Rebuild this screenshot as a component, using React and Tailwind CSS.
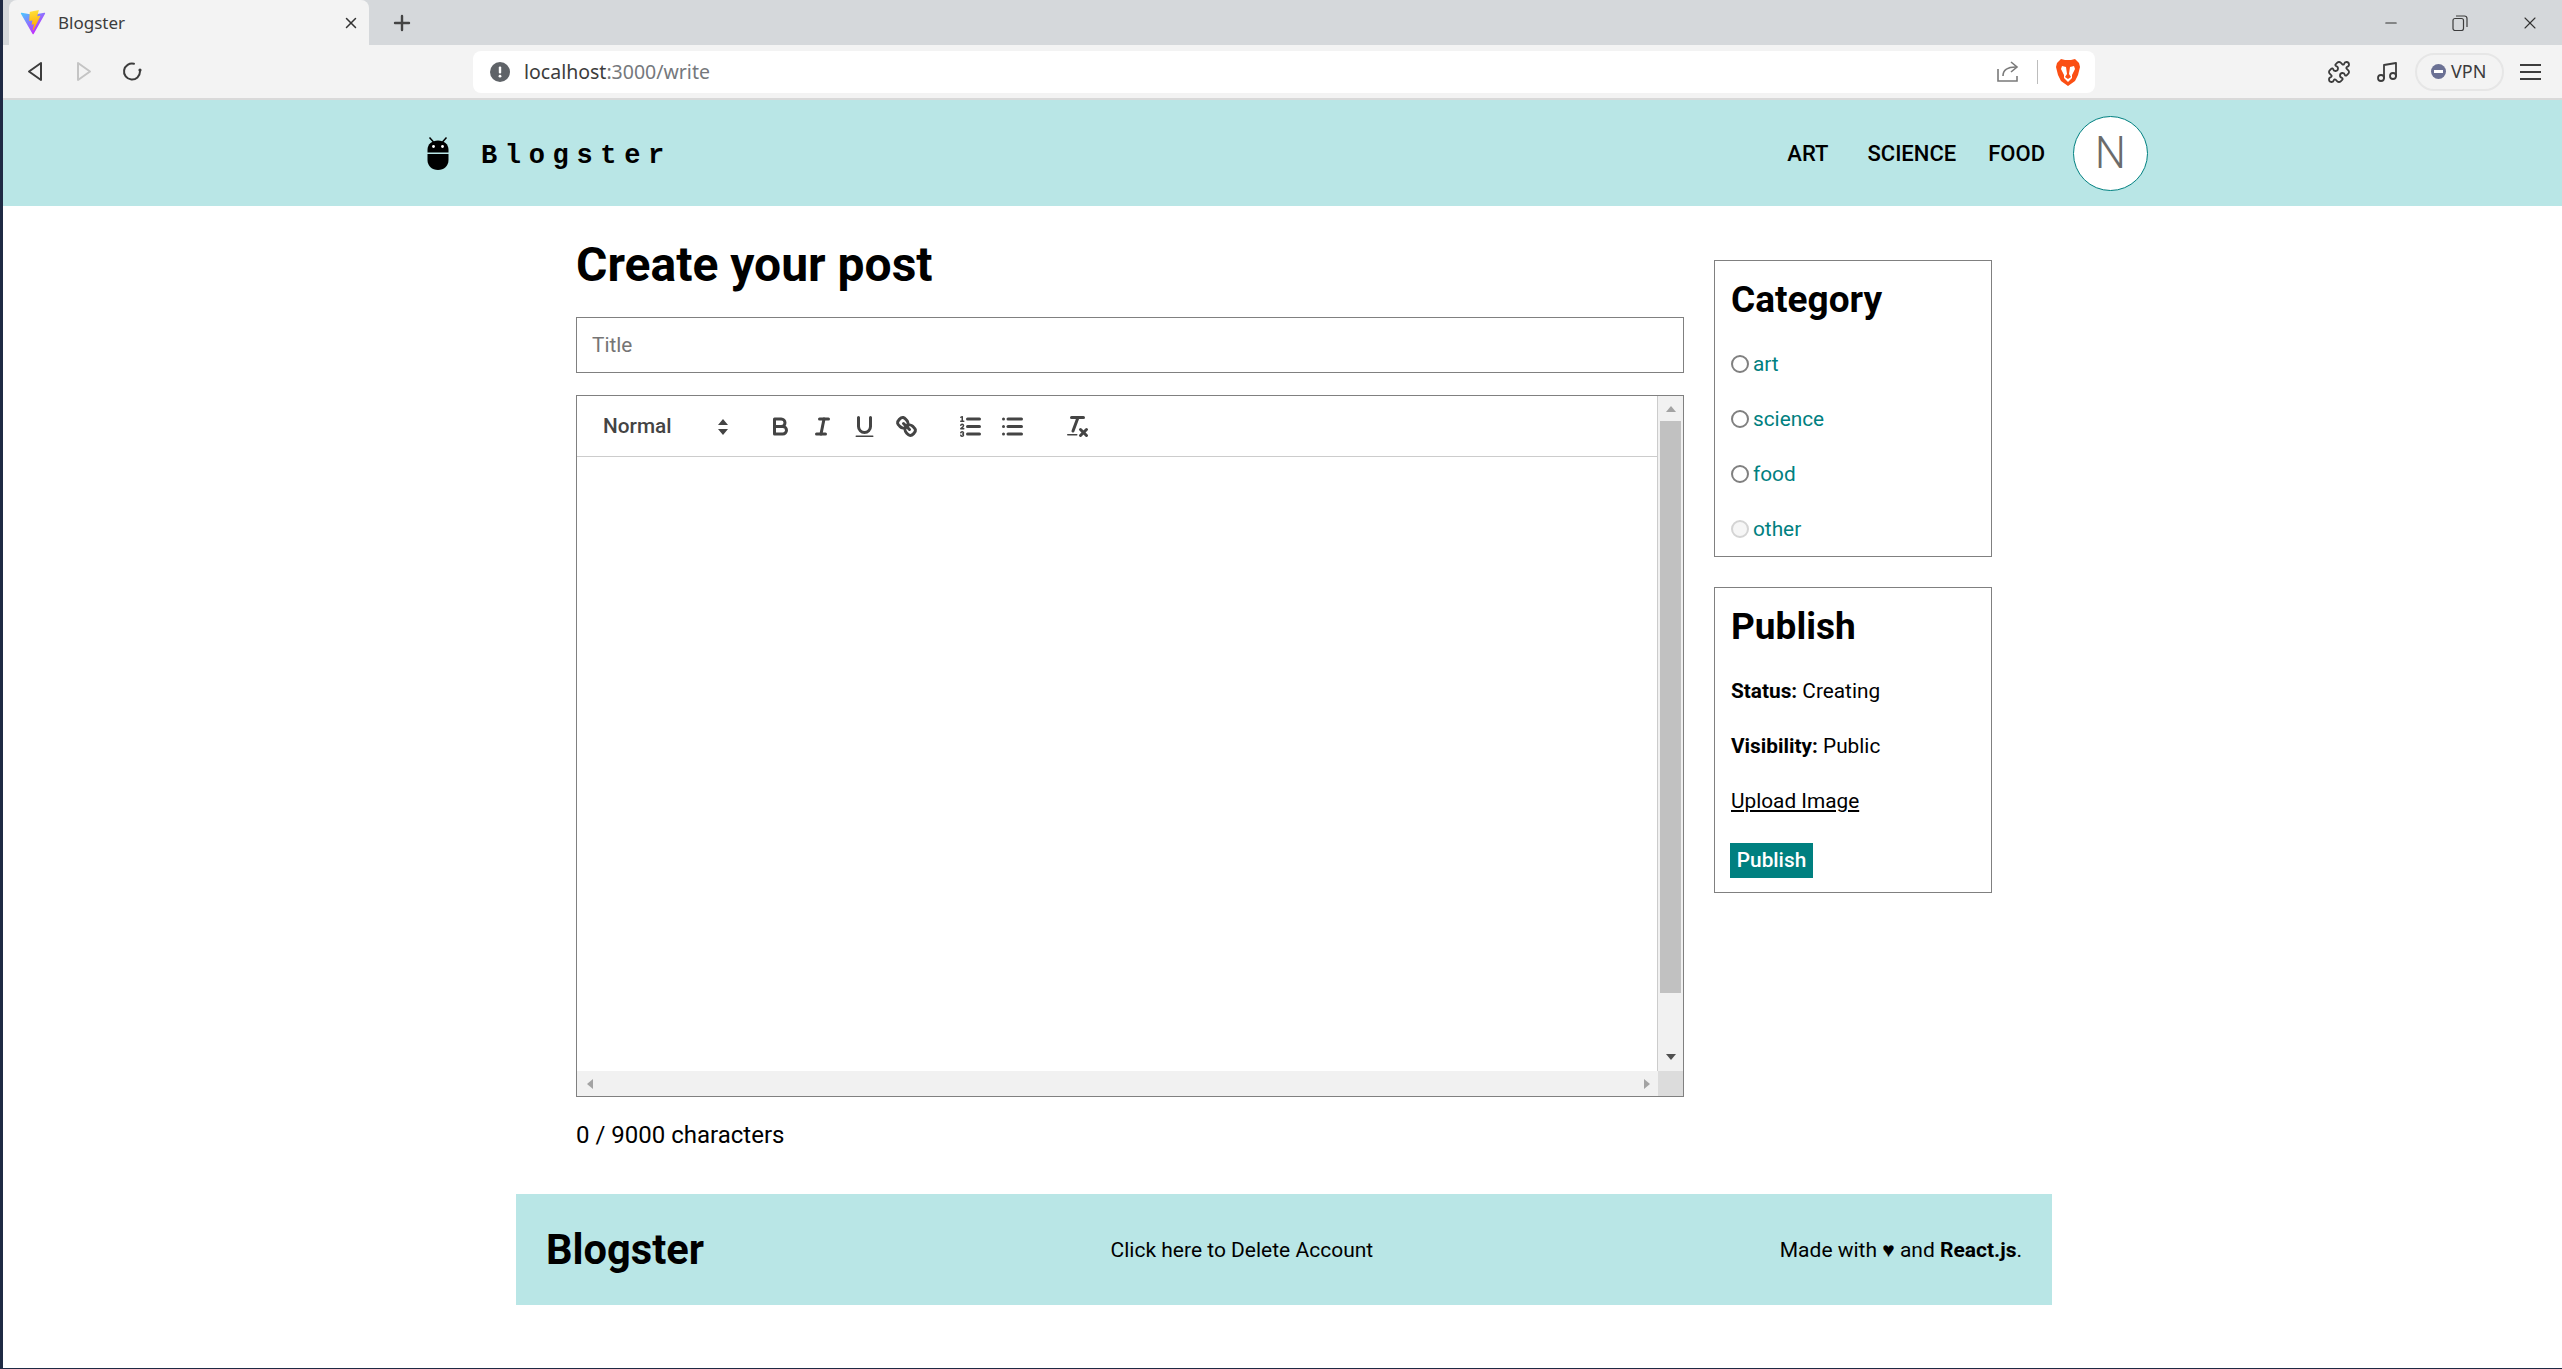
import { Puzzle, Music, Minus, X, Plus } from 'lucide-react';

const ViteLogo = () => (
  <svg width="26" height="25" viewBox="0 0 410 404" fill="none">
    <defs>
      <linearGradient id="viteA" x1="6" y1="33" x2="235" y2="344" gradientUnits="userSpaceOnUse">
        <stop stopColor="#41D1FF" />
        <stop offset="1" stopColor="#BD34FE" />
      </linearGradient>
      <linearGradient id="viteB" x1="194" y1="8" x2="236" y2="292" gradientUnits="userSpaceOnUse">
        <stop stopColor="#FFEA83" />
        <stop offset="0.08" stopColor="#FFDD35" />
        <stop offset="1" stopColor="#FFA800" />
      </linearGradient>
    </defs>
    <path d="M399.641 59.5246L215.643 388.545C211.844 395.338 202.084 395.378 198.228 388.618L10.5817 59.5563C6.38087 52.1896 12.6802 43.2665 21.0281 44.7586L205.223 77.6824C206.398 77.8924 207.601 77.8904 208.776 77.6763L389.119 44.8058C397.439 43.2894 403.768 52.1434 399.641 59.5246Z" fill="url(#viteA)" />
    <path d="M292.965 1.5744L156.801 28.2552C154.563 28.6937 152.906 30.5903 152.771 32.8664L144.395 174.33C144.198 177.662 147.258 180.248 150.51 179.498L188.42 170.749C191.967 169.931 195.172 173.055 194.443 176.622L183.18 231.775C182.422 235.487 185.907 238.661 189.532 237.56L212.947 230.446C216.577 229.344 220.065 232.527 219.297 236.242L201.398 322.875C200.278 328.294 207.486 331.249 210.492 326.603L212.5 323.5L323.454 102.072C325.312 98.3645 322.108 94.137 318.036 94.9228L279.014 102.454C275.347 103.161 272.227 99.746 273.262 96.1583L298.731 7.86689C299.767 4.27314 296.636 0.855181 292.965 1.5744Z" fill="url(#viteB)" />
  </svg>
);

const BackIcon = ({ flip, color }) => (
  <svg width="18" height="21" viewBox="0 0 18 21" fill="none" stroke={color} strokeWidth="2" strokeLinejoin="round" className={flip ? '-scale-x-100' : ''}>
    <path d="M15 2 L3 10.5 L15 19 Z" />
  </svg>
);

const ReloadIcon = () => (
  <svg width="20" height="21" viewBox="0 0 20 21" fill="none" stroke="#3c3c3c" strokeWidth="2" strokeLinecap="round" className="-ml-[2px]">
    <path d="M18 10.5 A8 8 0 1 1 12 2.8" />
    <circle cx="18" cy="9" r="1.6" fill="#3c3c3c" stroke="none" />
  </svg>
);

const InfoIcon = () => (
  <svg width="20" height="20" viewBox="0 0 20 20">
    <circle cx="10" cy="10" r="10" fill="#5f6368" />
    <rect x="8.8" y="4.5" width="2.4" height="7" rx="1" fill="#fff" />
    <circle cx="10" cy="14.2" r="1.4" fill="#fff" />
  </svg>
);

const ShareIcon = () => (
  <svg width="22" height="21" viewBox="0 0 22 21" fill="none" stroke="#7a7a7a" strokeWidth="1.6">
    <path d="M1 8 V20 H20 V15" />
    <path d="M6 15 C6 9 10 6 19 6" />
    <path d="M14 1 L20 6 L14 11" />
  </svg>
);

const BraveIcon = () => (
  <svg width="24" height="28" viewBox="0 0 24 28">
    <path d="M5 1 L9 2 H15 L19 1 L23 5 L24 9 L22 17 L19 23 L12 28 L5 23 L2 17 L0 9 L1 5 Z" fill="#fb4f14" />
    <path d="M6 8 L10 9 L11 16 L9 19 L12 21 L15 19 L13 16 L14 9 L18 8 L19 11 L16 17 L16 20 L12 24 L8 20 L8 17 L5 11 Z" fill="#fff" />
  </svg>
);

const RestoreIcon = () => (
  <svg width="16" height="16" viewBox="0 0 16 16" fill="none" stroke="#3c3c3c" strokeWidth="1.2">
    <rect x="1" y="3.5" width="10.5" height="12" rx="2" />
    <path d="M4 1 H12.5 A2.5 2.5 0 0 1 15 3.5 V12" />
  </svg>
);

const AndroidLogo = () => (
  <svg width="22" height="33" viewBox="0 0 22 33" fill="#000">
    <path d="M2.5 0.5 L6.5 5 M19.5 0.5 L15.5 5" stroke="#000" strokeWidth="1.5" />
    <path d="M0.5 15.5 V13 C0.5 7 5 3.5 11 3.5 C17 3.5 21.5 7 21.5 13 V15.5 Z" />
    <circle cx="6.5" cy="9.5" r="1.4" fill="#fff" />
    <circle cx="15.5" cy="9.5" r="1.4" fill="#fff" />
    <path d="M0.5 17 H21.5 V23 C21.5 29 17 33 11 33 C5 33 0.5 29 0.5 23 Z" />
  </svg>
);

const Quill = ({ children }) => (
  <button className="w-[42px] h-[36px] flex items-center justify-center">
    <svg width="27" height="27" viewBox="0 0 18 18" fill="none" stroke="#444" strokeWidth="2" strokeLinecap="round" strokeLinejoin="round">
      {children}
    </svg>
  </button>
);

const Toolbar = () => (
  <div className="h-[61px] border-b border-[#ccc] flex items-center pl-[26px] pt-px shrink-0">
    <div className="w-[156px] flex items-center justify-between pr-[31px] text-[20.8px] font-medium text-[#444]">
      <span>Normal</span>
      <svg width="10" height="16" viewBox="0 0 10 16" fill="#444">
        <path d="M5 0 L10 6 H0 Z M5 16 L0 10 H10 Z" />
      </svg>
    </div>
    <Quill>
      <path d="M5,4H9.5A2.5,2.5,0,0,1,12,6.5v0A2.5,2.5,0,0,1,9.5,9H5A0,0,0,0,1,5,9V4A0,0,0,0,1,5,4Z" />
      <path d="M5,9h5.5A2.5,2.5,0,0,1,13,11.5v0A2.5,2.5,0,0,1,10.5,14H5a0,0,0,0,1,0,0V9A0,0,0,0,1,5,9Z" />
    </Quill>
    <Quill>
      <line x1="7" x2="13" y1="4" y2="4" />
      <line x1="5" x2="11" y1="14" y2="14" />
      <line x1="8" x2="10" y1="14" y2="4" />
    </Quill>
    <Quill>
      <path d="M5,3V9a4.012,4.012,0,0,0,4,4H9a4.012,4.012,0,0,0,4-4V3" />
      <rect x="3" y="15" width="12" height="1" rx=".5" ry=".5" fill="#444" stroke="none" />
    </Quill>
    <Quill>
      <line x1="7" x2="11" y1="7" y2="11" />
      <path d="M8.9,4.577a3.476,3.476,0,0,1,.36,4.679A3.476,3.476,0,0,1,4.577,8.9C3.185,7.5,2.035,6.4,4.217,4.217S7.5,3.185,8.9,4.577Z" />
      <path d="M13.423,9.1a3.476,3.476,0,0,0-4.679-.36,3.476,3.476,0,0,0,.36,4.679c1.392,1.392,2.5,2.542,4.679.36S14.815,10.5,13.423,9.1Z" />
    </Quill>
    <div className="w-[22px]" />
    <Quill>
      <line x1="7" x2="15" y1="4" y2="4" />
      <line x1="7" x2="15" y1="9" y2="9" />
      <line x1="7" x2="15" y1="14" y2="14" />
      <line x1="2.5" x2="4.5" y1="5.5" y2="5.5" strokeWidth="1" />
      <path d="M3.5,6A0.5,0.5,0,0,1,3,5.5V3.085l-0.276.138A0.5,0.5,0,0,1,2.053,3c-0.124-.247-0.023-0.324.224-0.447l1-.5A0.5,0.5,0,0,1,4,2.5v3A0.5,0.5,0,0,1,3.5,6Z" fill="#444" stroke="none" />
      <path d="M4.5,10.5h-2c0-.234,1.85-1.076,1.85-2.234A0.959,0.959,0,0,0,2.5,8.156" strokeWidth="1" />
      <path d="M2.5,14.846a0.959,0.959,0,0,0,1.85-.109A0.7,0.7,0,0,0,3.75,14a0.688,0.688,0,0,0,.6-0.736,0.959,0.959,0,0,0-1.85-.109" strokeWidth="1" />
    </Quill>
    <Quill>
      <line x1="6" x2="15" y1="4" y2="4" />
      <line x1="6" x2="15" y1="9" y2="9" />
      <line x1="6" x2="15" y1="14" y2="14" />
      <line x1="3" x2="3" y1="4" y2="4" />
      <line x1="3" x2="3" y1="9" y2="9" />
      <line x1="3" x2="3" y1="14" y2="14" />
    </Quill>
    <div className="w-[23px]" />
    <Quill>
      <line x1="5" x2="13" y1="3" y2="3" />
      <line x1="6" x2="9.35" y1="12" y2="3" />
      <line x1="11" x2="15" y1="11" y2="15" />
      <line x1="15" x2="11" y1="11" y2="15" />
      <rect x="2" y="14" width="7" height="1" rx=".5" ry=".5" fill="#444" stroke="none" />
    </Quill>
  </div>
);

const Editor = () => (
  <div className="mt-[22px] h-[702px] border border-[#808080] flex flex-col">
    <div className="flex-1 flex min-h-0">
      <div className="flex-1 min-w-0">
        <Toolbar />
      </div>
      <div className="w-[26px] border-l border-[#ccc] bg-[#f1f1f1] flex flex-col items-center">
        <div className="h-[25px] flex items-center justify-center">
          <div className="w-0 h-0 border-x-[5px] border-x-transparent border-b-[6px] border-b-[#a3a3a3]" />
        </div>
        <div className="w-[21px] h-[572px] bg-[#c1c1c1]" />
        <div className="flex-1 flex items-end justify-center pb-[11px]">
          <div className="w-0 h-0 border-x-[5px] border-x-transparent border-t-[6px] border-t-[#505050]" />
        </div>
      </div>
    </div>
    <div className="h-[25px] bg-[#f1f1f1] flex items-center shrink-0">
      <div className="flex-1 flex items-center justify-between pl-[10px] pr-[8px]">
        <div className="w-0 h-0 border-y-[5px] border-y-transparent border-r-[6px] border-r-[#a3a3a3]" />
        <div className="w-0 h-0 border-y-[5px] border-y-transparent border-l-[6px] border-l-[#a3a3a3]" />
      </div>
      <div className="w-[25px] h-full bg-[#dcdcdc]" />
    </div>
  </div>
);

const categories = ['art', 'science', 'food', 'other'];

const Sidebar = () => (
  <div className="w-[278px] shrink-0 flex flex-col gap-[30px] mt-[54px]">
    <div className="h-[297px] border border-[#808080] pl-[16px]">
      <h2 className="text-[37px] font-bold leading-none mt-[20px] mb-[19px]">Category</h2>
      {categories.map((cat, i) => (
        <div key={cat} className="h-[55px] flex items-center gap-[4px] text-[20.8px] text-[#008080]">
          <span className={`w-[18px] h-[18px] rounded-full border-2 -mt-px ${i === 3 ? 'border-[#d4d4d4] bg-[#f6f6f6]' : 'border-[#808080] bg-white'}`} />
          <span>{cat}</span>
        </div>
      ))}
    </div>
    <div className="h-[306px] border border-[#808080] pl-[16px]">
      <h2 className="text-[37px] font-bold leading-none mt-[20px] mb-[19px]">Publish</h2>
      <p className="h-[55px] flex items-center text-[20.8px] whitespace-pre"><b>Status:</b> Creating</p>
      <p className="h-[55px] flex items-center text-[20.8px] whitespace-pre"><b>Visibility:</b> Public</p>
      <p className="h-[55px] flex items-center text-[20.8px] underline">Upload Image</p>
      <button className="mt-[14px] -ml-px w-[83px] h-[35px] bg-[#008080] text-white text-[20.8px] font-medium">Publish</button>
    </div>
  </div>
);

export default function App() {
  return (
    <div className="h-[1369px] overflow-hidden bg-[#1f2a44] flex flex-col pb-px" style={{ fontFamily: 'Roboto, sans-serif' }}>
      <div className="flex-1 ml-[3px] bg-white text-black flex flex-col min-h-0">
        {/* browser chrome */}
        <div className="h-[45px] bg-[#d5d8db] flex items-end shrink-0">
          <div className="ml-[6px] w-[360px] h-full bg-[#f3f3f3] rounded-t-lg flex items-center pl-[11px] pr-[9px] font-['Noto_Sans',sans-serif] text-[17px] text-[#3c3c3c]">
            <ViteLogo />
            <span className="ml-[12px] flex-1">Blogster</span>
            <X size={18} strokeWidth={2} color="#333" />
          </div>
          <div className="ml-[21px] h-full flex items-center">
            <Plus size={24} strokeWidth={2.4} color="#444" />
          </div>
          <div className="flex-1" />
          <div className="h-full flex items-center pr-[22px]">
            <Minus size={18} strokeWidth={1.4} color="#333" />
            <div className="w-[120px] flex justify-center"><RestoreIcon /></div>
            <X size={20} strokeWidth={1.3} color="#333" />
          </div>
        </div>
        <div className="h-[55px] bg-[#f3f3f3] border-b-2 border-[#d9d9d9] flex items-center shrink-0">
          <div className="ml-[23px] flex items-center gap-[31px]">
            <BackIcon color="#3c3c3c" />
            <BackIcon flip color="#c4c4c4" />
            <ReloadIcon />
          </div>
          <div className="ml-[331px] w-[1622px] h-[42px] bg-white rounded-lg flex items-center pl-[17px] pr-[15px]">
            <InfoIcon />
            <span className="ml-[14px] flex-1 text-[19.5px] font-['Noto_Sans',sans-serif] text-[#3c3c3c]">
              localhost<span className="text-[#75787c]">:3000/write</span>
            </span>
            <ShareIcon />
            <div className="mx-[18px] w-px h-[24px] bg-[#bdbdbd]" />
            <BraveIcon />
          </div>
          <div className="ml-[232px] flex items-center">
            <Puzzle size={24} strokeWidth={1.8} color="#3c3c3c" />
            <Music size={24} strokeWidth={1.8} color="#3c3c3c" className="ml-[24px]" />
            <div className="ml-[16px] w-[89px] h-[38px] border-2 border-[#e6e6e6] rounded-full flex items-center pl-[14px] gap-[5px] text-[18px] font-['Noto_Sans',sans-serif] text-[#3c3c3c]">
              <span className="w-[15px] h-[15px] rounded-full bg-[#6b7194] flex items-center justify-center">
                <span className="w-[9px] h-[3px] bg-white" />
              </span>
              VPN
            </div>
            <div className="ml-[16px] w-[21px] flex flex-col gap-[5px]">
              <span className="h-[2px] bg-[#3c3c3c]" />
              <span className="h-[2px] bg-[#3c3c3c]" />
              <span className="h-[2px] bg-[#3c3c3c]" />
            </div>
          </div>
        </div>

        {/* site nav */}
        <nav className="h-[106px] bg-[#b9e6e6] flex items-center justify-between pl-[424px] pr-[414px] shrink-0">
          <div className="flex items-center gap-[32px]">
            <AndroidLogo />
            <span className="font-['Liberation_Mono',monospace] font-bold text-[27px] tracking-[7.66px] mt-[6px]">Blogster</span>
          </div>
          <div className="flex items-center text-[22px] font-medium">
            <a>ART</a>
            <a className="ml-[39px]">SCIENCE</a>
            <a className="ml-[32px]">FOOD</a>
            <div className="ml-[28px] w-[75px] h-[75px] rounded-full bg-white border border-[#008080] flex items-center justify-center text-[44px] font-light text-[#6b6b6b]">N</div>
          </div>
        </nav>

        {/* page */}
        <div className="flex-1 pl-[3px]">
          <div className="w-[1416px] mx-auto flex gap-[30px]">
            <div className="flex-1 min-w-0">
              <h1 className="text-[48px] font-bold leading-none mt-[35px] mb-[28px]">Create your post</h1>
              <input
                placeholder="Title"
                className="w-full h-[56px] border border-[#808080] px-[15px] text-[20.8px] outline-none placeholder:text-[#757575]"
              />
              <Editor />
              <p className="mt-[23px] text-[24px] leading-[30px]">0 / 9000 characters</p>
            </div>
            <Sidebar />
          </div>
          <footer className="w-[1536px] h-[111px] mx-auto mt-[44px] bg-[#b9e6e6] flex items-center justify-between px-[30px] text-[21px]">
            <span className="text-[41.6px] font-bold pt-[2px]">Blogster</span>
            <span className="pt-[2px]">Click here to Delete Account</span>
            <span className="pt-[2px]">Made with ♥ and <b>React.js</b>.</span>
          </footer>
        </div>
      </div>
    </div>
  );
}
